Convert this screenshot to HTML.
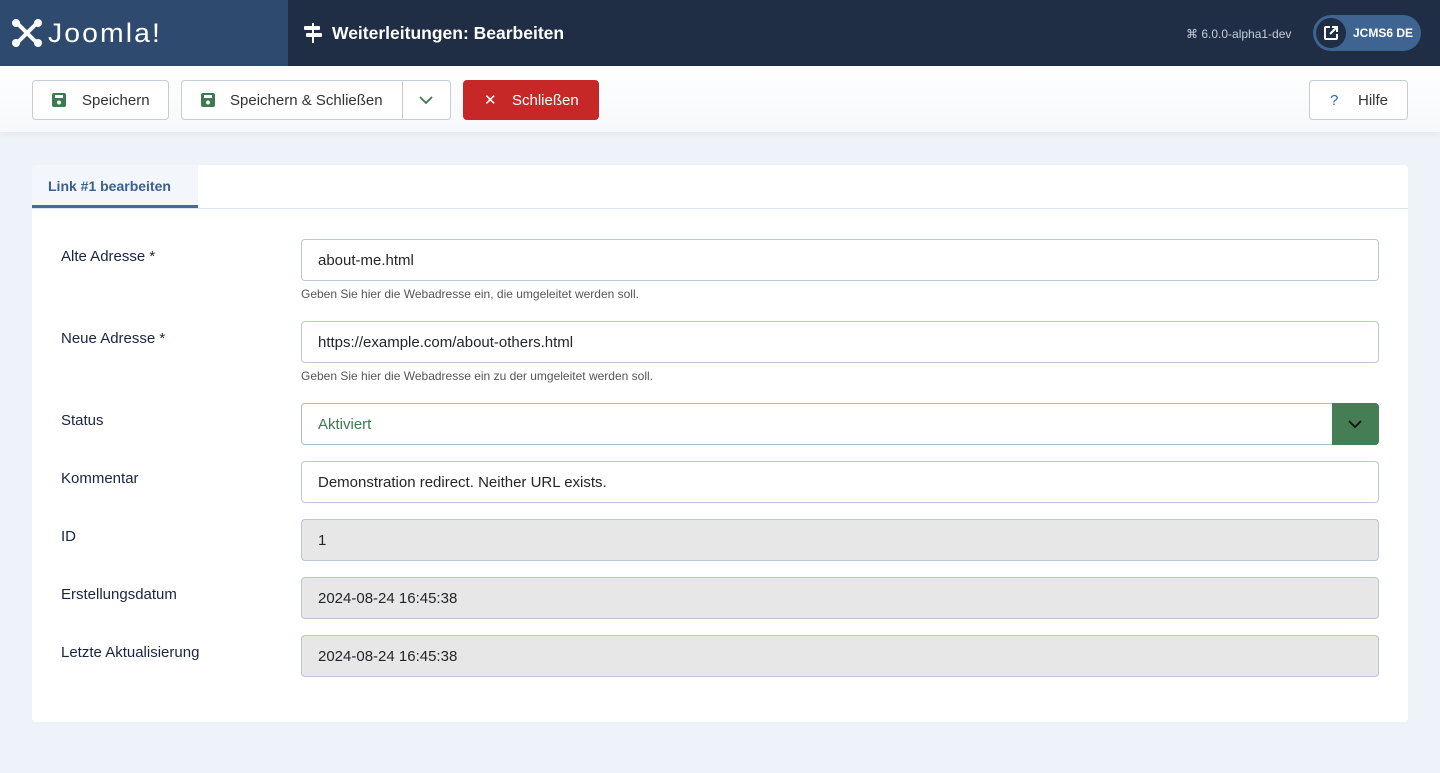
<!DOCTYPE html>
<html><head><meta charset="utf-8"><style>
*{box-sizing:border-box;margin:0;padding:0}
body{width:1440px;height:773px;overflow:hidden;background:#eef2f9;font-family:"Liberation Sans",sans-serif;color:#22262a}
.hdr{position:absolute;left:0;top:0;width:1440px;height:66px;background:#1f2d45}
.logo{position:absolute;left:0;top:0;width:288px;height:66px;background:#2e4a6e;color:#fff}
.logo .t{position:absolute;left:48px;top:18px;font-size:27px;letter-spacing:2px;font-weight:300;transform:scaleX(1.05);transform-origin:left}
.title{position:absolute;left:304px;top:23px;color:#fff;font-size:17.5px;font-weight:bold}
.ver{position:absolute;left:1186px;top:27px;color:#c8cfda;font-size:12px}
.pill{position:absolute;left:1313px;top:15px;width:108px;height:36px;border-radius:18px;background:#3f6491;color:#fff;font-size:12px;font-weight:bold}
.pill .c{position:absolute;left:3px;top:3px;width:30px;height:30px;border-radius:15px;background:#1f2d45}
.pill span{position:absolute;left:40px;top:11px}
.tb{position:absolute;left:0;top:66px;width:1440px;height:66px;background:linear-gradient(#fff,#f6f8fb);box-shadow:0 2px 6px rgba(0,0,0,.05)}
.btn{position:absolute;top:14px;height:40px;border:1px solid #c6ccd4;border-radius:4px;background:#fff;font-size:15px;color:#333;line-height:40px}
.btn svg{position:absolute;top:12px}
.card{position:absolute;left:32px;top:165px;width:1376px;height:557px;background:#fff;border-radius:4px}
.tabline{position:absolute;left:0;top:43px;width:1376px;height:1px;background:#dde3ec}
.tab{position:absolute;left:0;top:0;width:166px;height:43px;background:#f3f6fa;border-bottom:3px solid #4a6a96;color:#3e5f8a;font-weight:bold;font-size:14px;padding:13px 0 0 16px;border-top-left-radius:4px}
.lbl{position:absolute;left:61px;font-size:15px;color:#1a2540}
.inp{position:absolute;left:301px;width:1078px;height:42px;border:1px solid #b9c6d8;border-radius:4px;font-size:15px;padding:12px 16px;background:#fff}
.ro{background:#e7e7e7}
.help{position:absolute;left:301px;font-size:12px;color:#555}
</style></head><body>
<div class="hdr">
 <div class="logo">
  <svg style="position:absolute;left:11px;top:18px" width="32" height="30" viewBox="0 0 32 30"><g stroke="#fff" stroke-width="4" fill="none" stroke-linecap="round"><path d="M7 6 L25 24 M25 6 L7 24"/></g><g fill="#fff"><circle cx="5" cy="5" r="4"/><circle cx="27" cy="5" r="4"/><circle cx="5" cy="25" r="4"/><circle cx="27" cy="25" r="4"/></g></svg>
  <span class="t">Joomla!</span>
 </div>
 <svg style="position:absolute;left:304px;top:23px" width="18" height="20" viewBox="0 0 18 20" fill="#fff"><rect x="8" y="0" width="2" height="20"/><rect x="0" y="3" width="16" height="4" rx="1"/><rect x="2" y="10" width="16" height="4" rx="1"/></svg>
 <div class="title" style="left:332px">Weiterleitungen: Bearbeiten</div>
 <div class="ver">⌘ 6.0.0-alpha1-dev</div>
 <div class="pill"><div class="c"><svg style="position:absolute;left:8px;top:8px" width="14" height="14" viewBox="0 0 14 14" fill="none" stroke="#fff" stroke-width="2"><path d="M6 1H2a1 1 0 0 0-1 1v10a1 1 0 0 0 1 1h10a1 1 0 0 0 1-1V8M8 1h5v5M13 1L6 8"/></svg></div><span>JCMS6 DE</span></div>
</div>
<div class="tb">
 <div class="btn" style="left:32px;width:137px"><svg style="left:19px" width="14" height="14" viewBox="0 0 14 14"><rect width="14" height="14" rx="2" fill="#3d7a4e"/><rect x="3" y="2" width="8" height="3" fill="#fff"/><circle cx="7" cy="9.5" r="2" fill="#fff"/></svg><span style="position:absolute;left:49px">Speichern</span></div>
 <div class="btn" style="left:181px;width:270px"><svg style="left:19px" width="14" height="14" viewBox="0 0 14 14"><rect width="14" height="14" rx="2" fill="#3d7a4e"/><rect x="3" y="2" width="8" height="3" fill="#fff"/><circle cx="7" cy="9.5" r="2" fill="#fff"/></svg><span style="position:absolute;left:48px">Speichern &amp; Schließen</span><div style="position:absolute;left:220px;top:0;width:1px;height:38px;background:#c6ccd4"></div><svg style="left:237px;top:14px" width="14" height="10" viewBox="0 0 14 10" fill="none" stroke="#3d7a4e" stroke-width="1.8"><path d="M1 2l6 6 6-6"/></svg></div>
 <div class="btn" style="left:463px;width:136px;background:#c52827;border-color:#c52827;color:#fff"><span style="position:absolute;left:20px">✕</span><span style="position:absolute;left:48px">Schließen</span></div>
 <div class="btn" style="left:1309px;width:99px"><span style="position:absolute;left:20px;color:#2a69b8">?</span><span style="position:absolute;left:48px">Hilfe</span></div>
</div>
<div class="card"><div class="tabline"></div><div class="tab">Link #1 bearbeiten</div></div>
<div class="lbl" style="top:248px">Alte Adresse *</div>
<div class="inp" style="top:239px">about-me.html</div>
<div class="help" style="top:287px">Geben Sie hier die Webadresse ein, die umgeleitet werden soll.</div>
<div class="lbl" style="top:330px">Neue Adresse *</div>
<div class="inp" style="top:321px">https://example.com/about-others.html</div>
<div class="help" style="top:369px">Geben Sie hier die Webadresse ein zu der umgeleitet werden soll.</div>
<div class="lbl" style="top:412px">Status</div>
<div class="inp" style="top:403px;color:#3d7a4e;border-color:#a9bccb">Aktiviert<div style="position:absolute;right:-1px;top:-1px;width:47px;height:42px;background:#457d54;border-radius:0 4px 4px 0"><svg style="position:absolute;left:16px;top:17px" width="14" height="9" viewBox="0 0 14 9" fill="none" stroke="#111" stroke-width="1.8"><path d="M1 1l6 6 6-6"/></svg></div></div>
<div class="lbl" style="top:470px">Kommentar</div>
<div class="inp" style="top:461px">Demonstration redirect. Neither URL exists.</div>
<div class="lbl" style="top:528px">ID</div>
<div class="inp ro" style="top:519px">1</div>
<div class="lbl" style="top:586px">Erstellungsdatum</div>
<div class="inp ro" style="top:577px">2024-08-24 16:45:38</div>
<div class="lbl" style="top:644px">Letzte Aktualisierung</div>
<div class="inp ro" style="top:635px">2024-08-24 16:45:38</div>
</body></html>
